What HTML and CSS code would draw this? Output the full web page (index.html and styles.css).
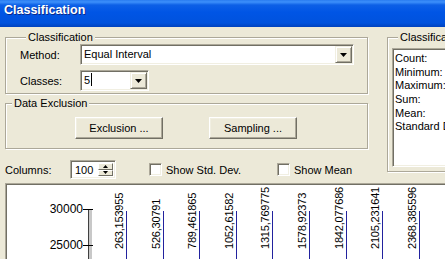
FILE: index.html
```html
<!DOCTYPE html>
<html lang="en">
<head>
    <meta charset="UTF-8">
    <title>Classification</title>
    <link rel="stylesheet" href="styles.css">
</head>
<body>
    <div class="titlebar">Classification</div>
    <div class="client">
        <div class="top">
            <div class="left-col">
                <div class="group group-class">
                    <span class="group-title">Classification</span>
                    <div class="field-row">
                        <span class="field-label">Method:</span>
                        <div class="field combo combo-wide">
                            <span class="combo-text">Equal Interval</span>
                            <span class="drop-btn"><svg width="7" height="4" viewBox="0 0 7 4"><path d="M0 0h7L3.5 4z"/></svg></span>
                        </div>
                    </div>
                    <div class="field-row">
                        <span class="field-label">Classes:</span>
                        <div class="field combo combo-small">
                            <span class="combo-text">5<span class="caret"></span></span>
                            <span class="drop-btn"><svg width="7" height="4" viewBox="0 0 7 4"><path d="M0 0h7L3.5 4z"/></svg></span>
                        </div>
                    </div>
                </div>

                <div class="group group-excl">
                    <span class="group-title">Data Exclusion</span>
                    <div class="btn-row">
                        <button class="btn">Exclusion ...</button>
                        <button class="btn">Sampling ...</button>
                    </div>
                </div>

                <div class="toolbar">
                    <span class="columns-label">Columns:</span>
                    <div class="field spin">
                        <span class="spin-text">100</span>
                        <span class="spin-btns">
                            <span class="spin-btn"><svg width="5" height="3" viewBox="0 0 5 3"><path d="M2.5 0L5 3H0z"/></svg></span>
                            <span class="spin-btn"><svg width="5" height="3" viewBox="0 0 5 3"><path d="M0 0h5L2.5 3z"/></svg></span>
                        </span>
                    </div>
                    <label class="check check-std"><span class="field check-box"></span>Show Std. Dev.</label>
                    <label class="check"><span class="field check-box"></span>Show Mean</label>
                </div>
            </div>

            <div class="group group-stats">
                <span class="group-title">Classification Statistics</span>
                <div class="field listbox">
                    <div>Count:</div>
                    <div>Minimum:</div>
                    <div>Maximum:</div>
                    <div>Sum:</div>
                    <div>Mean:</div>
                    <div>Standard Deviation:</div>
                </div>
            </div>
        </div>

        <div class="chart">
            <svg class="chart-svg" width="438" height="80" viewBox="0 0 438 80">
                <rect x="81" y="24" width="4" height="60" fill="#c8c8c8"/>
                <line x1="81.5" y1="24" x2="81.5" y2="80" stroke="#404040"/>
                <line x1="76" y1="24.5" x2="86" y2="24.5" stroke="#000"/>
                <line x1="76" y1="60.5" x2="86" y2="60.5" stroke="#000"/>
                <text class="axis-label" x="76" y="28" text-anchor="end">30000</text>
                <text class="axis-label" x="76" y="64" text-anchor="end">25000</text>

                <g class="bars" stroke="#22229e">
                    <line x1="119.5" y1="26" x2="119.5" y2="80"/>
                    <line x1="156.5" y1="26" x2="156.5" y2="80"/>
                    <line x1="192.5" y1="26" x2="192.5" y2="80"/>
                    <line x1="229.5" y1="26" x2="229.5" y2="80"/>
                    <line x1="265.5" y1="26" x2="265.5" y2="80"/>
                    <line x1="302.5" y1="26" x2="302.5" y2="80"/>
                    <line x1="339.5" y1="26" x2="339.5" y2="80"/>
                    <line x1="375.5" y1="26" x2="375.5" y2="80"/>
                    <line x1="412.5" y1="26" x2="412.5" y2="80"/>
                </g>

                <text class="break-label" transform="translate(116,64) rotate(-90)">263,153955</text>
                <text class="break-label" transform="translate(153,64) rotate(-90)">526,30791</text>
                <text class="break-label" transform="translate(189,64) rotate(-90)">789,461865</text>
                <text class="break-label" transform="translate(226,64) rotate(-90)">1052,61582</text>
                <text class="break-label" transform="translate(262,64) rotate(-90)">1315,769775</text>
                <text class="break-label" transform="translate(299,64) rotate(-90)">1578,92373</text>
                <text class="break-label" transform="translate(336,64) rotate(-90)">1842,077686</text>
                <text class="break-label" transform="translate(372,64) rotate(-90)">2105,231641</text>
                <text class="break-label" transform="translate(409,64) rotate(-90)">2368,385596</text>
            </svg>
        </div>
    </div>
</body>
</html>
```

FILE: styles.css
```css
body { margin: 0; width: 445px; height: 259px; overflow: hidden; background: #ece9d8; font: 11px "Liberation Sans", Arial, sans-serif; color: #000; }

.titlebar { height: 27px; box-sizing: border-box; padding: 3px 0 0 4px; line-height: 24px; font: bold 12.5px "Liberation Sans", Arial, sans-serif; color: #fff; text-shadow: 1px 1px #0c2a8a; background: linear-gradient(#2a7cf0 0, #3d90fb 2px, #0d60e6 5px, #0055e5 45%, #0052dd 85%, #0042be 100%); }

.client { padding: 10px 0 0 5px; }
.top { display: flex; align-items: flex-start; gap: 19px; }
.left-col { width: 363px; flex: none; }

/* etched group boxes */
.group { box-sizing: border-box; border: 1px solid #aca899; box-shadow: 1px 1px #fff, inset 1px 1px #fff; }
.group-title { display: block; width: max-content; margin: -7px 0 0 6px; padding: 0 2px; line-height: 13px; background: #ece9d8; }

/* sunken fields */
.field { box-sizing: border-box; background: #fff; border: 1px solid; border-color: #aca899 #fff #fff #aca899; box-shadow: inset 1px 1px #716f64, inset -1px -1px #f1efe2; }

.group-class { height: 57px; padding: 0 13px 0 14px; }
.field-row { display: flex; align-items: center; }
.field-row + .field-row { margin-top: 5px; }
.field-label { width: 60px; flex: none; }

.combo { display: flex; height: 21px; padding: 1px; }
.combo-wide { width: 274px; }
.combo-small { width: 69px; }
.combo-text { flex: 1; padding-left: 2px; line-height: 17px; white-space: nowrap; }
.caret { display: inline-block; width: 1px; height: 13px; margin-left: 1px; background: #000; vertical-align: -2px; }
.drop-btn { display: flex; align-items: center; justify-content: center; width: 17px; height: 17px; box-sizing: border-box; background: #ece9d8; border: 1px solid; border-color: #f1efe2 #716f64 #716f64 #f1efe2; box-shadow: inset 1px 1px #fff, inset -1px -1px #aca899; }

.group-excl { height: 46px; margin-top: 9px; }
.btn-row { display: flex; gap: 46px; margin-top: 7px; padding-left: 69px; }
.btn { width: 88px; height: 22px; box-sizing: border-box; padding: 0; font: inherit; color: #000; background: #ece9d8; border: 1px solid; border-color: #fff #716f64 #716f64 #fff; box-shadow: inset -1px -1px #aca899, inset 1px 1px #f1efe2; }

.toolbar { display: flex; align-items: center; height: 19px; margin-top: 11px; }
.columns-label { width: 65px; flex: none; }
.spin { display: flex; width: 46px; height: 19px; padding: 2px; }
.spin-text { flex: 1; padding-left: 2px; line-height: 15px; }
.spin-btns { display: flex; flex-direction: column; width: 15px; }
.spin-btn { flex: 1; display: flex; align-items: center; justify-content: center; box-sizing: border-box; background: #ece9d8; border: 1px solid; border-color: #fff #716f64 #716f64 #fff; }
.check { display: flex; align-items: center; gap: 4px; }
.check-std { width: 128px; margin-left: 33px; }
.check-box { width: 13px; height: 13px; }

.group-stats { width: 120px; height: 135px; flex: none; padding-left: 4px; }
.listbox { width: 110px; height: 119px; margin-top: 4px; padding: 2px 2px; line-height: 14px; white-space: nowrap; overflow: hidden; }
.listbox div { height: 13.7px; padding-left: 0; }

.chart { width: 460px; height: 90px; margin-top: 4px; background: #fff; border-top: 1px solid #aca899; border-left: 1px solid #aca899; box-shadow: inset 1px 1px #716f64; padding: 1px 0 0 1px; box-sizing: border-box; }
.chart-svg { display: block; }
.axis-label { font: 12px "Liberation Sans", Arial, sans-serif; fill: #000; }
.break-label { font: 11px "Liberation Sans", Arial, sans-serif; letter-spacing: -0.2px; fill: #000; }
```
